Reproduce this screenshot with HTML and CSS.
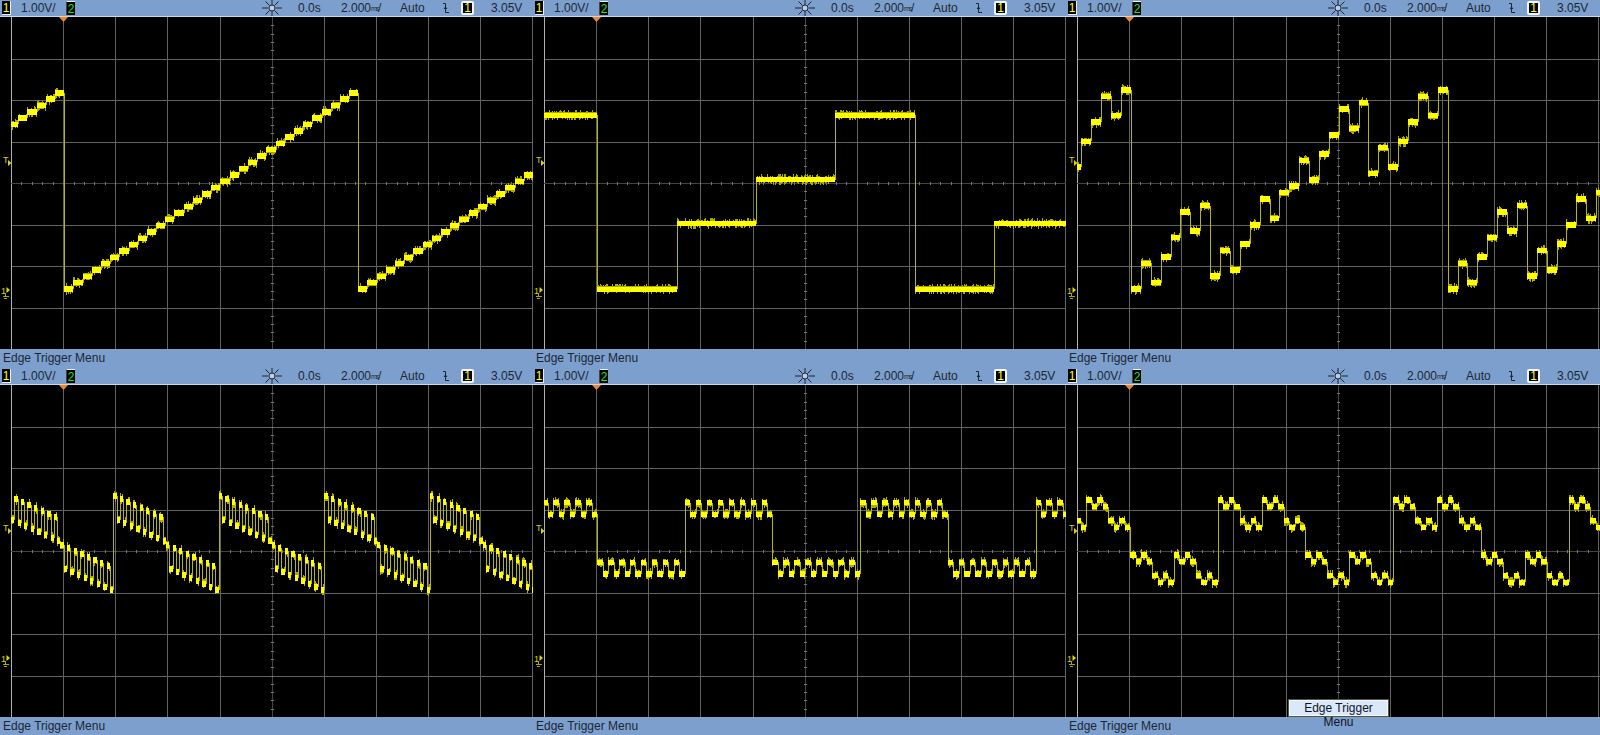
FILE: index.html
```html
<!DOCTYPE html>
<html lang="en">
<head>
    <meta charset="UTF-8">
    <title>Scope captures</title>
    <link rel="stylesheet" href="styles.css">
</head>
<body>

<svg class="defs" width="0" height="0">
    <symbol id="sun" viewBox="0 0 20 16">
        <path d="M0 8H6M14 8H20M10 0V5M10 11V16M3.5 1.5L7.5 5.5M16.5 1.5L12.5 5.5M3.5 14.5L7.5 10.5M16.5 14.5L12.5 10.5" stroke="#1c2733" fill="none"/>
        <circle cx="10" cy="8" r="3" fill="#b9cde6" stroke="#1c2733"/>
    </symbol>
    <symbol id="edge" viewBox="0 0 8 16">
        <path d="M1 3.5H3.5V12.5H7M2 9L3.5 7L5 9" stroke="#1c2733" fill="none"/>
    </symbol>
</svg>

<div id="screen">

    <div class="panel">
        <div class="status">
            <span class="ch ch-one">1</span><span class="volts">1.00V/</span><span class="ch ch-two">2</span>
            <svg class="sun"><use href="#sun"/></svg>
            <span class="delay">0.0s</span><span class="time">2.000<span class="unit">ms</span>/</span><span class="mode">Auto</span>
            <svg class="edge"><use href="#edge"/></svg>
            <span class="ch ch-trig">1</span><span class="level">3.05V</span>
        </div>
        <div class="plot"><svg class="scope"></svg></div>
        <div class="menu">Edge Trigger Menu</div>
    </div>

    <div class="panel">
        <div class="status">
            <span class="ch ch-one">1</span><span class="volts">1.00V/</span><span class="ch ch-two">2</span>
            <svg class="sun"><use href="#sun"/></svg>
            <span class="delay">0.0s</span><span class="time">2.000<span class="unit">ms</span>/</span><span class="mode">Auto</span>
            <svg class="edge"><use href="#edge"/></svg>
            <span class="ch ch-trig">1</span><span class="level">3.05V</span>
        </div>
        <div class="plot"><svg class="scope"></svg></div>
        <div class="menu">Edge Trigger Menu</div>
    </div>

    <div class="panel">
        <div class="status">
            <span class="ch ch-one">1</span><span class="volts">1.00V/</span><span class="ch ch-two">2</span>
            <svg class="sun"><use href="#sun"/></svg>
            <span class="delay">0.0s</span><span class="time">2.000<span class="unit">ms</span>/</span><span class="mode">Auto</span>
            <svg class="edge"><use href="#edge"/></svg>
            <span class="ch ch-trig">1</span><span class="level">3.05V</span>
        </div>
        <div class="plot"><svg class="scope"></svg></div>
        <div class="menu">Edge Trigger Menu</div>
    </div>

    <div class="panel">
        <div class="status">
            <span class="ch ch-one">1</span><span class="volts">1.00V/</span><span class="ch ch-two">2</span>
            <svg class="sun"><use href="#sun"/></svg>
            <span class="delay">0.0s</span><span class="time">2.000<span class="unit">ms</span>/</span><span class="mode">Auto</span>
            <svg class="edge"><use href="#edge"/></svg>
            <span class="ch ch-trig">1</span><span class="level">3.05V</span>
        </div>
        <div class="plot"><svg class="scope"></svg></div>
        <div class="menu">Edge Trigger Menu</div>
    </div>

    <div class="panel">
        <div class="status">
            <span class="ch ch-one">1</span><span class="volts">1.00V/</span><span class="ch ch-two">2</span>
            <svg class="sun"><use href="#sun"/></svg>
            <span class="delay">0.0s</span><span class="time">2.000<span class="unit">ms</span>/</span><span class="mode">Auto</span>
            <svg class="edge"><use href="#edge"/></svg>
            <span class="ch ch-trig">1</span><span class="level">3.05V</span>
        </div>
        <div class="plot"><svg class="scope"></svg></div>
        <div class="menu">Edge Trigger Menu</div>
    </div>

    <div class="panel">
        <div class="status">
            <span class="ch ch-one">1</span><span class="volts">1.00V/</span><span class="ch ch-two">2</span>
            <svg class="sun"><use href="#sun"/></svg>
            <span class="delay">0.0s</span><span class="time">2.000<span class="unit">ms</span>/</span><span class="mode">Auto</span>
            <svg class="edge"><use href="#edge"/></svg>
            <span class="ch ch-trig">1</span><span class="level">3.05V</span>
        </div>
        <div class="plot">
            <svg class="scope"></svg>
            <div class="tip">Edge Trigger Menu</div>
        </div>
        <div class="menu">Edge Trigger Menu</div>
    </div>

</div>

<script src="script.js"></script>
</body>
</html>
```

FILE: styles.css
```css
body {
    margin: 0;
    background-color: #000;
    font-family: "Liberation Sans", Arial, sans-serif;
    font-size: 12px;
    color: #1c2733;
}

.defs {
    position: absolute;
}

#screen {
    display: grid;
    grid-template-columns: 533px 533px 534px;
    grid-template-rows: 367px 368px;
    width: 1600px;
    height: 735px;
    overflow: hidden;
}

.panel {
    display: grid;
    grid-template-rows: 1fr 332px 18px;
    min-width: 0;
}

.status {
    display: flex;
    align-items: center;
    background-color: #7c9fce;
    border-bottom: 1px solid #c9d8ec;
    white-space: nowrap;
}

.ch {
    box-sizing: border-box;
    width: 9px;
    height: 14px;
    line-height: 14px;
    text-align: center;
    background-color: #000;
    color: #ffff20;
}

.ch-one {
    margin-left: 2px;
    border-right: 1px solid #e8eef6;
    border-bottom: 1px solid #e8eef6;
}

.ch-two {
    color: #20e020;
    border-top: 1px solid #e8eef6;
    border-left: 1px solid #444;
}

.ch-trig {
    width: 13px;
    margin-left: 11px;
    border: 2px solid #f2f5fa;
    border-radius: 2px;
    line-height: 10px;
}

.volts {
    width: 45px;
    margin-left: 10px;
}

.sun {
    width: 20px;
    height: 16px;
    margin-left: 187px;
}

.delay {
    width: 43px;
    margin-left: 16px;
}

.time {
    width: 59px;
}

.unit {
    display: inline-block;
    width: 7px;
    font-size: 7px;
    letter-spacing: -1px;
    vertical-align: 1px;
}

.mode {
    width: 42px;
}

.edge {
    width: 8px;
    height: 16px;
}

.level {
    margin-left: 17px;
}

.plot {
    position: relative;
    background-color: #000;
}

.scope {
    display: block;
    width: 100%;
    height: 332px;
}

.menu {
    box-sizing: border-box;
    padding-left: 3px;
    line-height: 18px;
    background-color: #7c9fce;
    white-space: nowrap;
}

.tip {
    position: absolute;
    left: 223px;
    top: 315px;
    width: 99px;
    box-sizing: border-box;
    height: 16px;
    line-height: 14px;
    text-align: center;
    background-color: #d9e8fb;
    border: 1px solid #f4f7fb;
    outline: 1px solid #55553a;
    color: #10151c;
}
```

FILE: script.js
```js
// Waveforms are step functions: each gives the level (y inside the plot) for step i of 32
const weighted = (w, i) => w.reduce((sum, v, bit) => sum + ((i >> bit) & 1) * v, 0);

const waves = [
    { left: 63.7, step: 9.19, steps: 32, height: 5.5, level: i => 272 - 6.33 * i },
    { left: 64, step: 79.3, steps: 4, height: 5, level: i => [272, 206.5, 162.5, 98][i] },
    { left: 64.4, step: 9.9, steps: 32, height: 5.5, level: i => 272 - weighted([25.7, 6.4, 51.4, 12.8, 102.8], i) },
    { left: 112.7, step: 3.3, steps: 32, height: 6, level: i => 111 + 1.5 * (i & ~1) + 23.6 * (i & 1) + 25.3 * (i >> 4 & 1) },
    { left: 151.3, step: 5.48, steps: 32, height: 5.5, level: i => 117.7 + weighted([11.7, 0, 0, 0, 59.7], i) },
    { left: 151.3, step: 5.48, steps: 32, height: 5.5, level: i => 115 + weighted([6.7, 0, 20.7, 0, 55], i) }
];

// Small repeatable random so the noise is the same on every load
let seed = 12345;
function rnd() {
    seed = (seed * 1103515245 + 12345) & 0x7fffffff;
    return seed / 0x7fffffff;
}

function addPath(svg, d, color) {
    const p = document.createElementNS("http://www.w3.org/2000/svg", "path");
    p.setAttribute("d", d);
    p.setAttribute("stroke", color);
    p.setAttribute("fill", "none");
    p.setAttribute("shape-rendering", "crispEdges");
    svg.appendChild(p);
}

function addFilled(svg, d, color) {
    addPath(svg, d, "none");
    svg.lastChild.setAttribute("fill", color);
    svg.lastChild.removeAttribute("shape-rendering");
}

function addText(svg, x, y, text) {
    const t = document.createElementNS("http://www.w3.org/2000/svg", "text");
    t.setAttribute("x", x);
    t.setAttribute("y", y);
    t.setAttribute("fill", "#d8d800");
    t.setAttribute("font-size", "9");
    t.textContent = text;
    svg.appendChild(t);
}

function drawGrid(svg) {
    const dx = 52.13, dy = 41.5, x0 = 11;
    let lines = "", ticks = "";
    for (let k = 1; k <= 10; k++) {
        if (k === 5) continue;
        const x = Math.round(x0 + dx * k) + 0.5;
        lines += `M${x} 0V332`;
    }
    for (let k = 1; k <= 7; k++) {
        if (k === 4) continue;
        lines += `M${x0} ${Math.round(dy * k) + 0.5}H534`;
    }
    addPath(svg, lines, "#626262");
    addPath(svg, `M${x0 + 0.5} 0V332`, "#b0b0b0");

    // Centre axes are dimmer and carry the small division ticks
    const cx = Math.round(x0 + dx * 5) + 0.5, cy = 166.5;
    addPath(svg, `M${cx} 0V332M${x0} ${cy}H534`, "#444");
    for (let k = 1; k < 50; k++) {
        const x = Math.round(x0 + dx * k / 5) + 0.5;
        ticks += `M${x} ${cy - 1.5}V${cy + 1.5}`;
    }
    for (let k = 1; k < 40; k++) {
        const y = Math.round(dy * k / 5) + 0.5;
        ticks += `M${cx - 1.5} ${y}H${cx + 1.5}`;
    }
    addPath(svg, ticks, "#777");
}

function drawWave(svg, wave) {
    let core = "", noise = "", edges = "", prev = null, prevStep = null;
    const half = wave.height / 2;
    for (let x = 11; x < 534; x++) {
        const pos = Math.floor((x - wave.left) / wave.step);
        const i = ((pos % wave.steps) + wave.steps) % wave.steps;
        const y = wave.level(i);
        if (prevStep !== null && pos !== prevStep) {
            edges += `M${x + 0.5} ${prev}V${y}`;
        }
        const up = rnd() < 0.35 ? 1 + rnd() * 2 : rnd() * 0.6;
        const down = rnd() < 0.35 ? 1 + rnd() * 2 : rnd() * 0.6;
        core += `M${x + 0.5} ${y - half}V${y + half}`;
        noise += `M${x + 0.5} ${y - half - up}V${y + half + down}`;
        prev = y;
        prevStep = pos;
    }
    addPath(svg, noise, "#a8a800");
    addPath(svg, edges, "#b4b410");
    addPath(svg, core, "#ffff00");
}

function drawMarkers(svg) {
    addFilled(svg, "M59 0H68L63.5 5Z", "#f5861f");
    // Trigger level
    addText(svg, 3, 146, "T");
    addFilled(svg, "M8 143L11.5 146L8 149Z", "#d8d800");
    // Channel 1 ground
    addText(svg, 1, 277, "1");
    addFilled(svg, "M6.5 270L10 273L6.5 276Z", "#d8d800");
    addPath(svg, "M5.5 276V279M2.5 279.5H8.5M4 281.5H7", "#a8a800");
}

document.querySelectorAll(".scope").forEach((svg, n) => {
    drawGrid(svg);
    drawWave(svg, waves[n]);
    drawMarkers(svg);
});
```
